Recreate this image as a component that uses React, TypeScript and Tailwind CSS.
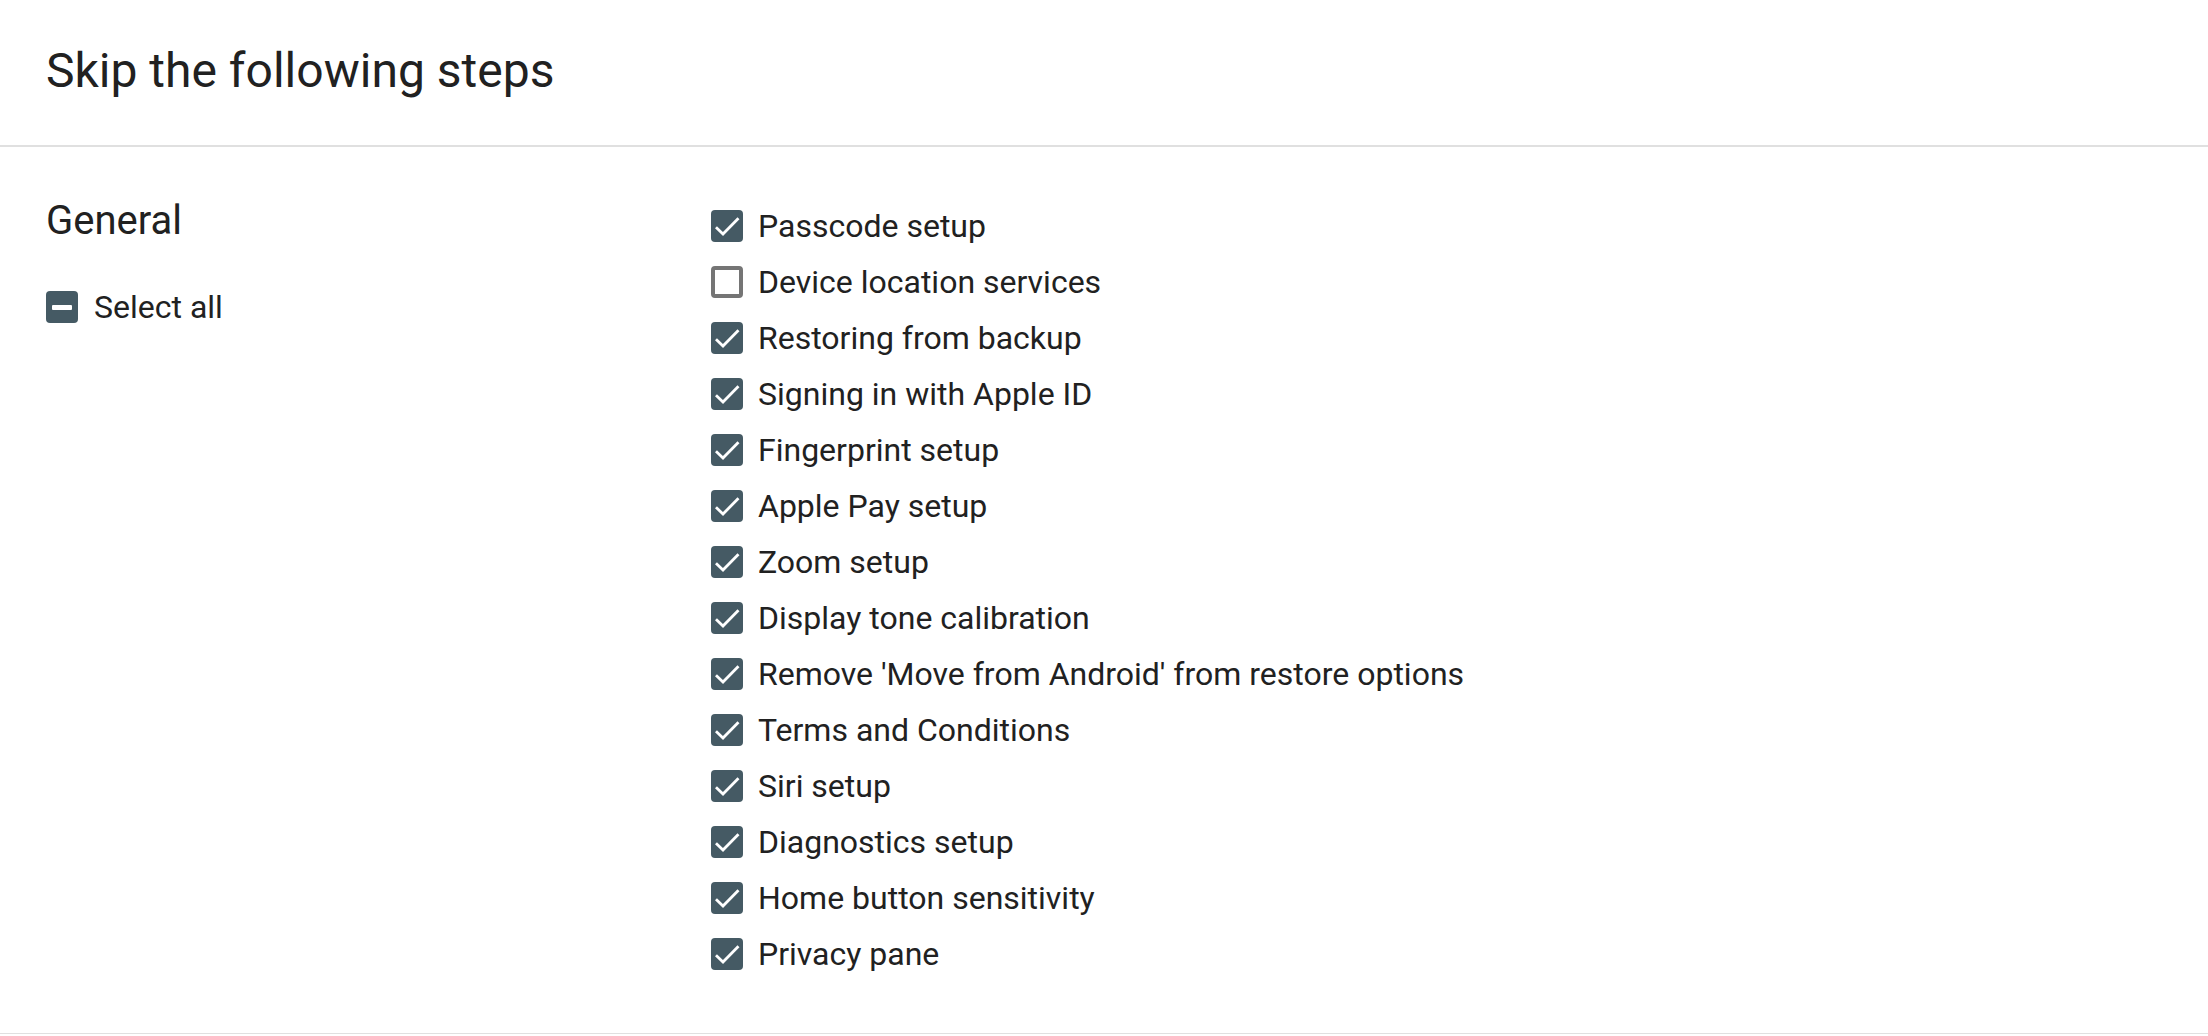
import React from "react";

const steps = [
  { label: "Passcode setup", checked: true },
  { label: "Device location services", checked: false },
  { label: "Restoring from backup", checked: true },
  { label: "Signing in with Apple ID", checked: true },
  { label: "Fingerprint setup", checked: true },
  { label: "Apple Pay setup", checked: true },
  { label: "Zoom setup", checked: true },
  { label: "Display tone calibration", checked: true },
  { label: "Remove 'Move from Android' from restore options", checked: true },
  { label: "Terms and Conditions", checked: true },
  { label: "Siri setup", checked: true },
  { label: "Diagnostics setup", checked: true },
  { label: "Home button sensitivity", checked: true },
  { label: "Privacy pane", checked: true },
];

type BoxState = "checked" | "unchecked" | "indeterminate";

function Box({ state }: { state: BoxState }) {
  if (state === "unchecked") {
    return (
      <span className="block h-[32px] w-[32px] shrink-0 rounded-[4px] border-4 border-[#757575] bg-white" />
    );
  }
  return (
    <span className="flex h-[32px] w-[32px] shrink-0 items-center justify-center rounded-[4px] bg-[#455a64]">
      {state === "checked" ? (
        <svg width="32" height="32" viewBox="0 0 32 32" fill="none">
          <polyline
            points="6,18.3 12,24 26.5,9.3"
            stroke="#ffffff"
            strokeWidth="2.8"
            strokeLinecap="square"
            strokeLinejoin="miter"
          />
        </svg>
      ) : (
        <span className="block h-[5px] w-[20px] rounded-[1px] bg-white" />
      )}
    </span>
  );
}

export default function App() {
  return (
    <div
      className="min-h-[1036px] w-full bg-white text-[#212121]"
      style={{ fontFamily: "Roboto, 'Noto Sans', sans-serif" }}
    >
      <div className="border-b-2 border-[#e0e0e0] px-[46px] pt-[43px] pb-[46px]">
        <h1 className="text-[48px] leading-[56px] font-normal">
          Skip the following steps
        </h1>
      </div>

      <div className="flex border-b border-[#e0e0e0] px-[46px] pb-[51px]">
        <div className="w-[665px] shrink-0 pt-[50px]">
          <h2 className="text-[40px] leading-[48px] font-normal">General</h2>
          <label className="mt-[42px] flex items-center gap-[16px]">
            <Box state="indeterminate" />
            <span className="text-[32px] leading-[40px]">Select all</span>
          </label>
        </div>

        <div className="flex flex-col pt-[51px]">
          {steps.map((s) => (
            <label
              key={s.label}
              className="flex h-[56px] items-center gap-[15px]"
            >
              <Box state={s.checked ? "checked" : "unchecked"} />
              <span className="text-[32px] leading-[40px]">{s.label}</span>
            </label>
          ))}
        </div>
      </div>
    </div>
  );
}
